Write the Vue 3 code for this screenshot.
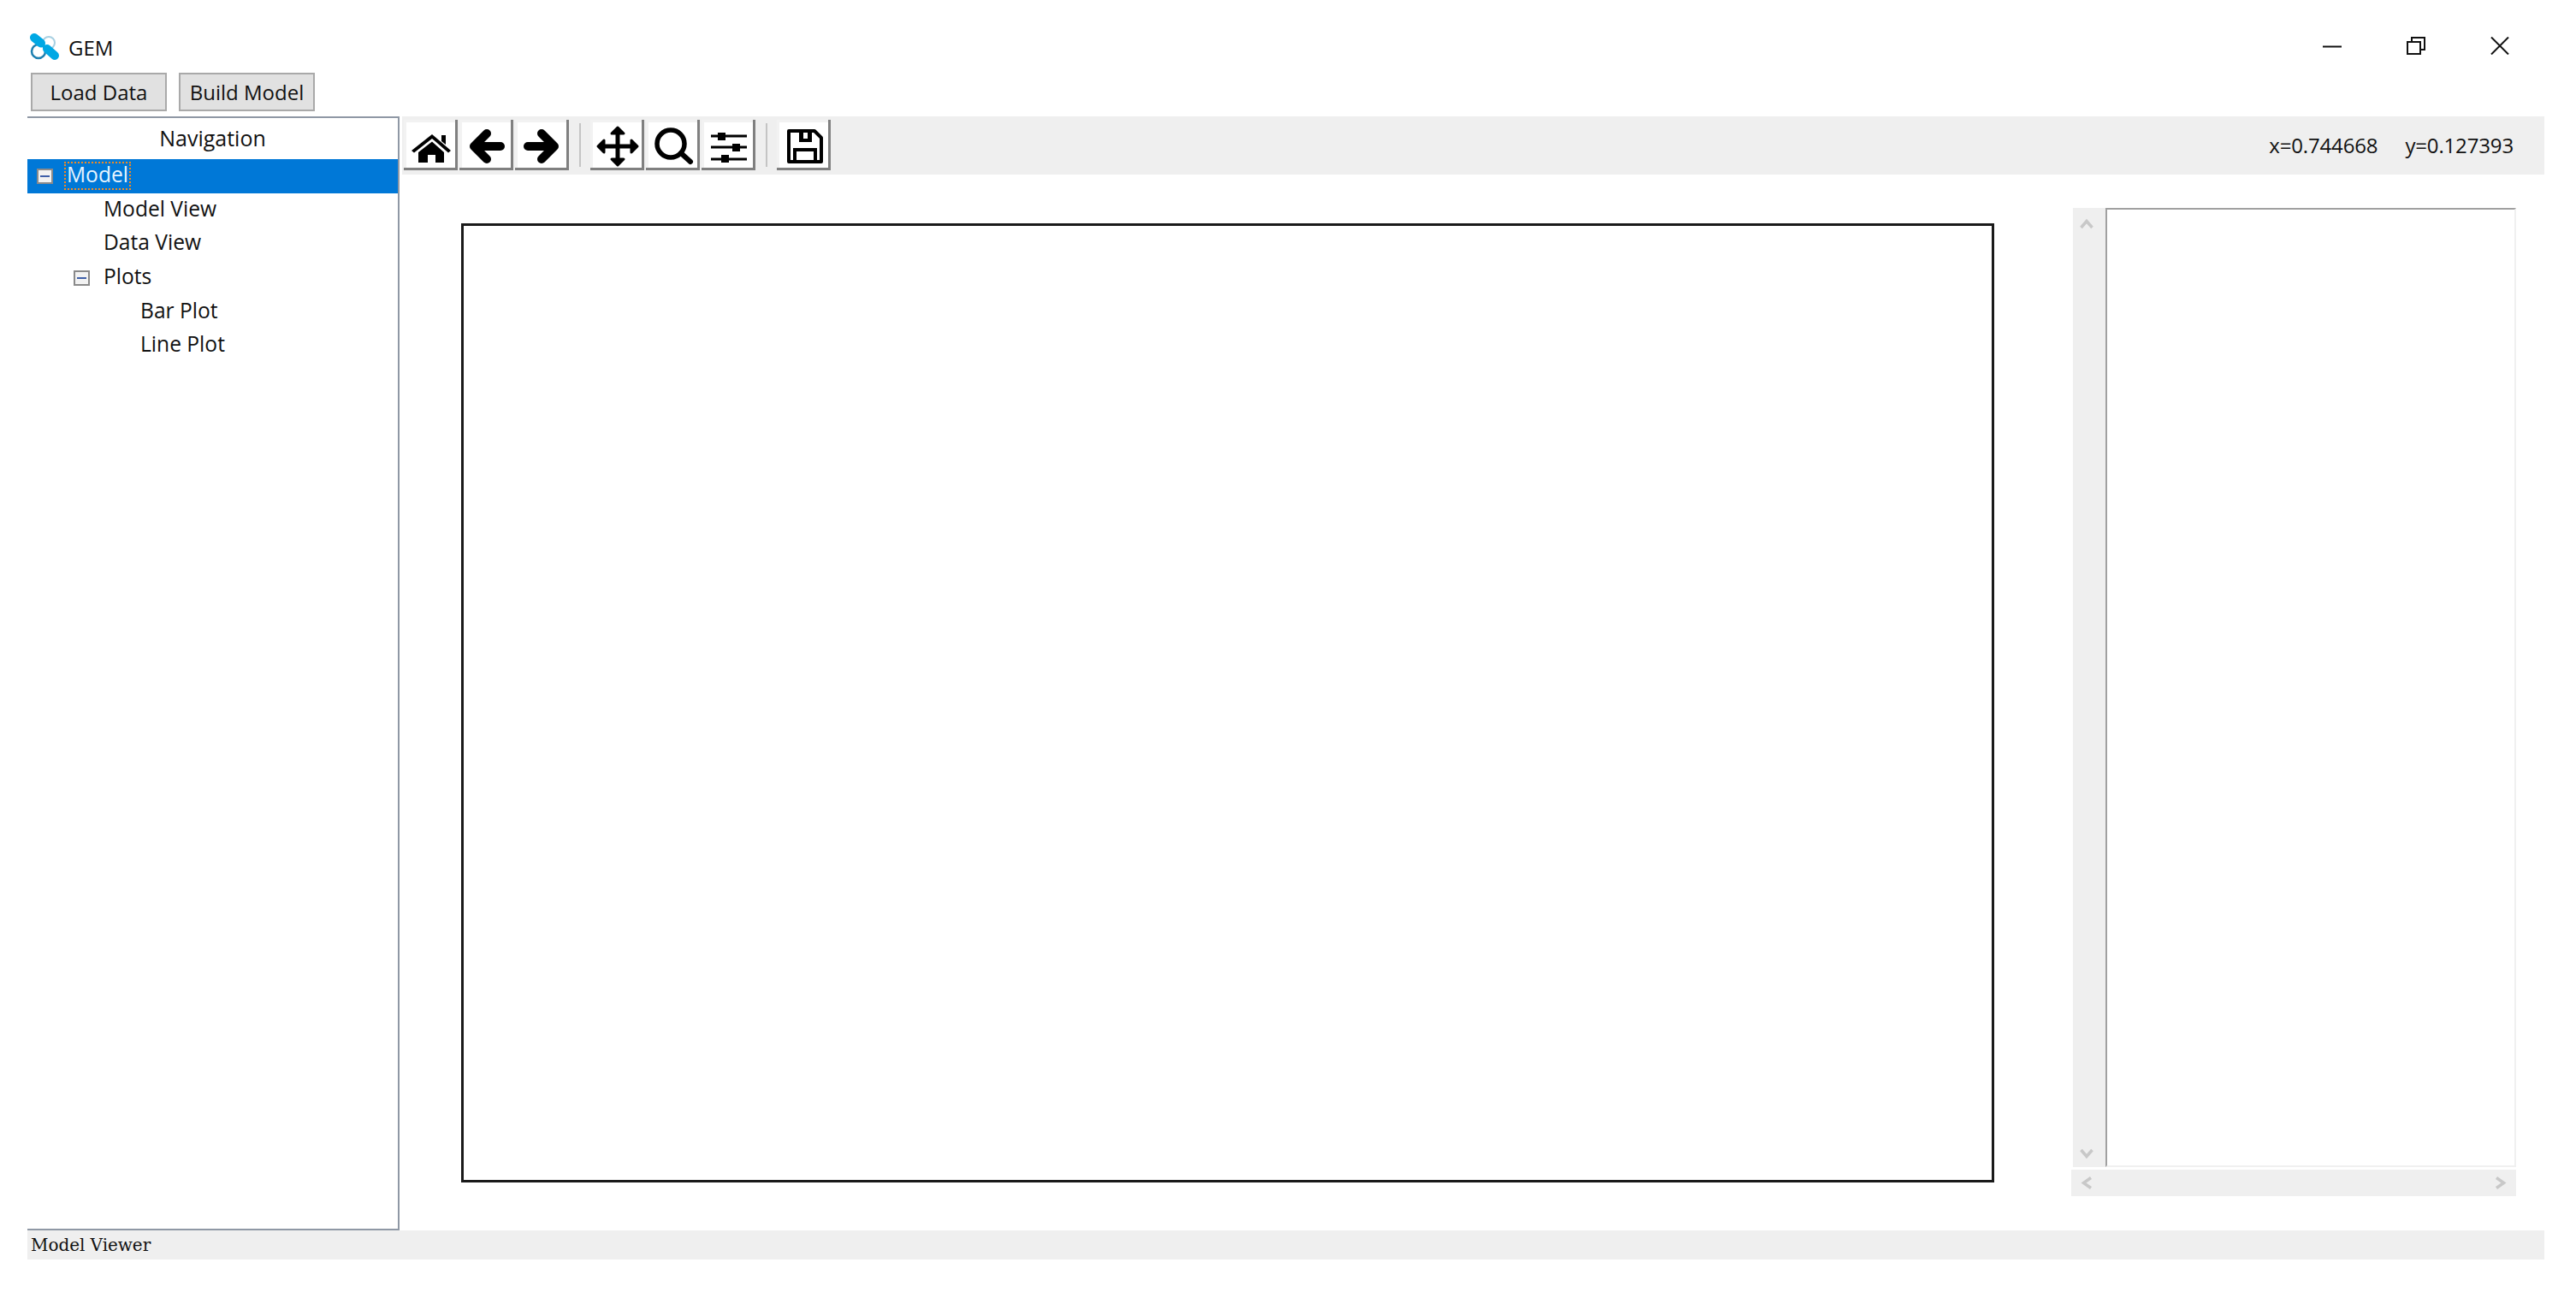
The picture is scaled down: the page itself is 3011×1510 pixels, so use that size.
<template>
  <div class="window">
    <!-- title bar -->
    <div class="titlebar">
      <svg class="app-icon" width="36" height="34" viewBox="0 0 36 34">
        <circle cx="11" cy="21" r="8" fill="none" stroke="#1d7fb0" stroke-width="2.500" />
        <circle cx="23" cy="11" r="7" fill="none" stroke="#a8d0e2" stroke-width="2" />
        <path d="M6 5L14 11.500M21 18L30 26" stroke="#00a8e4" stroke-width="10" stroke-linecap="round" />
      </svg>
      <span class="app-title">GEM</span>
      <div class="win-controls">
        <svg width="22" height="20" viewBox="0 0 22 20"><path d="M0 11.500H22" stroke="#111" stroke-width="2" /></svg>
        <svg width="22" height="21" viewBox="0 0 22 21"><path d="M1 6H16V20H1Z M6 6V1H21V15H16" fill="none" stroke="#111" stroke-width="2" /></svg>
        <svg width="22" height="21" viewBox="0 0 22 21"><path d="M1 0.500L21 20.500M21 0.500L1 20.500" stroke="#111" stroke-width="2" /></svg>
      </div>
    </div>

    <!-- action buttons -->
    <div class="actions">
      <button class="action-btn">Load Data</button>
      <button class="action-btn">Build Model</button>
    </div>

    <div class="main">
      <!-- navigation tree -->
      <aside class="nav">
        <div class="nav-title">Navigation</div>
        <div
          v-for="item in tree"
          :key="item.label"
          class="tree-row"
          :class="{ selected: item.selected }"
          :style="{ paddingLeft: item.indent + 'px' }"
        >
          <span v-if="item.expander" class="expander"><i></i></span>
          <span class="tree-label">{{ item.label }}</span>
        </div>
      </aside>

      <section class="viewer">
        <!-- matplotlib toolbar -->
        <div class="toolbar">
          <button class="tool-btn">
            <svg viewBox="0 0 63 59">
              <path d="M9 36L33 17L55 36L52 38.500L33 22L12 38.500Z" fill="#000" />
              <path d="M44 18H49V29L44 25Z" fill="#000" />
              <path d="M17 38L33 25.500L47 38V50H37V41H28V50H17Z" fill="#000" />
            </svg>
          </button>
          <button class="tool-btn">
            <svg viewBox="0 0 63 59"><path d="M48 31H17M32 16L17 31L32 46" fill="none" stroke="#000" stroke-width="10" stroke-linecap="round" stroke-linejoin="round" /></svg>
          </button>
          <button class="tool-btn">
            <svg viewBox="0 0 63 59"><path d="M15 31H46M31 16L46 31L31 46" fill="none" stroke="#000" stroke-width="10" stroke-linecap="round" stroke-linejoin="round" /></svg>
          </button>
          <span class="tool-sep"></span>
          <button class="tool-btn">
            <svg viewBox="0 0 63 59">
              <path d="M32 10V52M10 31H54" stroke="#000" stroke-width="5" />
              <path d="M32 9L39 16H25ZM32 53L39 46H25ZM9 31L16 24V38ZM55 31L48 24V38Z" fill="#000" stroke="#000" stroke-width="3" stroke-linejoin="round" />
            </svg>
          </button>
          <button class="tool-btn">
            <svg viewBox="0 0 63 59">
              <circle cx="29" cy="28" r="16" fill="none" stroke="#000" stroke-width="5.500" />
              <path d="M41 39L52 49" stroke="#000" stroke-width="6" stroke-linecap="round" />
            </svg>
          </button>
          <button class="tool-btn">
            <svg viewBox="0 0 63 59">
              <path d="M11 19H53M11 32H53M11 46H53" stroke="#000" stroke-width="3" />
              <rect x="19" y="15" width="9" height="9" fill="#000" />
              <rect x="36" y="28" width="9" height="9" fill="#000" />
              <rect x="23" y="41" width="9" height="9" fill="#000" />
            </svg>
          </button>
          <span class="tool-sep"></span>
          <button class="tool-btn">
            <svg viewBox="0 0 63 59">
              <path d="M14 13H44L52 21V49H14Z" fill="none" stroke="#000" stroke-width="4" stroke-linejoin="round" />
              <path d="M26 13V26H41V13H36V22H31V13Z" fill="#000" />
              <path d="M21 49V35H45V49" fill="none" stroke="#000" stroke-width="4" />
            </svg>
          </button>
          <div class="coords">
            <span>x=0.744668</span>
            <span>y=0.127393</span>
          </div>
        </div>

        <div class="workspace">
          <div class="canvas"></div>
          <div class="side">
            <div class="side-top">
              <div class="vscroll">
                <svg width="16" height="13" viewBox="0 0 16 13"><path d="M1.500 11L8 3.500L14.500 11" fill="none" stroke="#c8c8c8" stroke-width="3.500" /></svg>
                <svg width="16" height="13" viewBox="0 0 16 13"><path d="M1.500 2L8 9.500L14.500 2" fill="none" stroke="#c8c8c8" stroke-width="3.500" /></svg>
              </div>
              <div class="text-box"></div>
            </div>
            <div class="hscroll">
              <svg width="14" height="15" viewBox="0 0 14 15"><path d="M12 1.500L3.500 7.500L12 13.500" fill="none" stroke="#c8c8c8" stroke-width="3.500" /></svg>
              <svg width="14" height="15" viewBox="0 0 14 15"><path d="M2 1.500L10.500 7.500L2 13.500" fill="none" stroke="#c8c8c8" stroke-width="3.500" /></svg>
            </div>
          </div>
        </div>
      </section>
    </div>

    <div class="statusbar">Model Viewer</div>
  </div>
</template>

<script setup>
const tree = [
  { label: 'Model', indent: 11, expander: true, selected: true },
  { label: 'Model View', indent: 86 },
  { label: 'Data View', indent: 86 },
  { label: 'Plots', indent: 54, expander: true },
  { label: 'Bar Plot', indent: 129 },
  { label: 'Line Plot', indent: 129 }
]
</script>

<style>
html, body {
  margin: 0;
  background: #fff;
}
</style>

<style scoped>
.window {
  width: 3011px;
  height: 1510px;
  box-sizing: border-box;
  padding: 0 37px 0 32px;
  background: #fff;
  font-family: "Open Sans", "Noto Sans", sans-serif;
  font-size: 24px;
  color: #111;
  overflow: hidden;
}

.titlebar {
  height: 85px;
  box-sizing: border-box;
  padding: 39px 0 0 2px;
  display: flex;
  align-items: flex-start;
}

.app-icon {
  display: block;
}

.app-title {
  margin-left: 10px;
  line-height: 34px;
}

.win-controls {
  margin-left: auto;
  margin-right: 41px;
  margin-top: 4px;
  display: flex;
  align-items: flex-start;
  gap: 76px;
}

.actions {
  height: 51px;
  padding-left: 4px;
  display: flex;
  gap: 14px;
  align-items: flex-start;
}

.action-btn {
  width: 159px;
  height: 45px;
  padding: 0;
  border: 2px solid #a9a9a9;
  background: #e1e1e1;
  font: inherit;
  color: #111;
}

.main {
  height: 1302px;
  display: flex;
}

.nav {
  width: 435px;
  height: 1302px;
  box-sizing: border-box;
  border: 2px solid #8f98a5;
  border-left: 0;
}

.nav-title {
  height: 48px;
  line-height: 46px;
  text-align: center;
  font-size: 25px;
}

.tree-row {
  height: 39.600px;
  display: flex;
  align-items: center;
  font-size: 24.600px;
}

.tree-row.selected {
  background: #0078d7;
  color: #e6f4ff;
}

.expander {
  width: 19px;
  height: 18px;
  box-sizing: border-box;
  border: 2px solid #8a8a8a;
  background: #f2f2f2;
  display: flex;
  align-items: center;
  justify-content: center;
  margin-right: 13px;
}

.expander i {
  display: block;
  width: 11px;
  height: 2px;
  background: #3f5fa8;
}

.tree-label {
  height: 33px;
  box-sizing: border-box;
  line-height: 26px;
  padding: 0 1px;
  border: 2px dotted transparent;
}

.selected .tree-label {
  border-color: #f08a24;
}

.viewer {
  flex: 1;
  margin-left: 3px;
  display: flex;
  flex-direction: column;
}

.toolbar {
  height: 68px;
  box-sizing: border-box;
  padding: 4px 0 0 2px;
  background: #efefef;
  display: flex;
  align-items: flex-start;
  gap: 2px;
}

.tool-btn {
  width: 63px;
  height: 59px;
  padding: 0;
  box-sizing: border-box;
  background: #fff;
  border: 0;
  box-shadow: inset -3px -3px 0 #808080, inset 3px 3px 0 #f2f2f2;
}

.tool-btn svg {
  display: block;
  width: 63px;
  height: 59px;
}

.tool-sep {
  width: 2px;
  height: 51px;
  margin: 4px 9px 0 10px;
  background: #c4c4c4;
}

.coords {
  margin-left: auto;
  padding-right: 36px;
  display: flex;
  gap: 32px;
  line-height: 60px;
  font-size: 24px;
  letter-spacing: -0.150px;
}

.workspace {
  flex: 1;
  display: flex;
  align-items: flex-start;
}

.canvas {
  width: 1792px;
  height: 1121px;
  box-sizing: border-box;
  margin: 57px 0 0 69px;
  border: 3px solid #1a1a1a;
  background: #fff;
}

.side {
  width: 520px;
  margin: 39px 0 0 90px;
  display: flex;
  flex-direction: column;
  gap: 3px;
}

.side-top {
  height: 1121px;
  padding-left: 2px;
  display: flex;
}

.vscroll {
  width: 38px;
  box-sizing: border-box;
  padding: 12px 0 9px 8px;
  background: #efefef;
  display: flex;
  flex-direction: column;
  justify-content: space-between;
}

.text-box {
  flex: 1;
  box-sizing: border-box;
  border-style: solid;
  border-width: 2px;
  border-color: #a0a0a0 #f0f0f0 #f0f0f0 #a0a0a0;
  background: #fff;
}

.hscroll {
  height: 31px;
  box-sizing: border-box;
  padding: 8px 11px 0 11px;
  background: #efefef;
  display: flex;
  align-items: flex-start;
  justify-content: space-between;
}

.statusbar {
  height: 34px;
  box-sizing: border-box;
  padding-left: 4px;
  background: #efefef;
  font-family: "DejaVu Serif", "Liberation Serif", serif;
  font-size: 20px;
  line-height: 34px;
  letter-spacing: -0.050px;
}
</style>
